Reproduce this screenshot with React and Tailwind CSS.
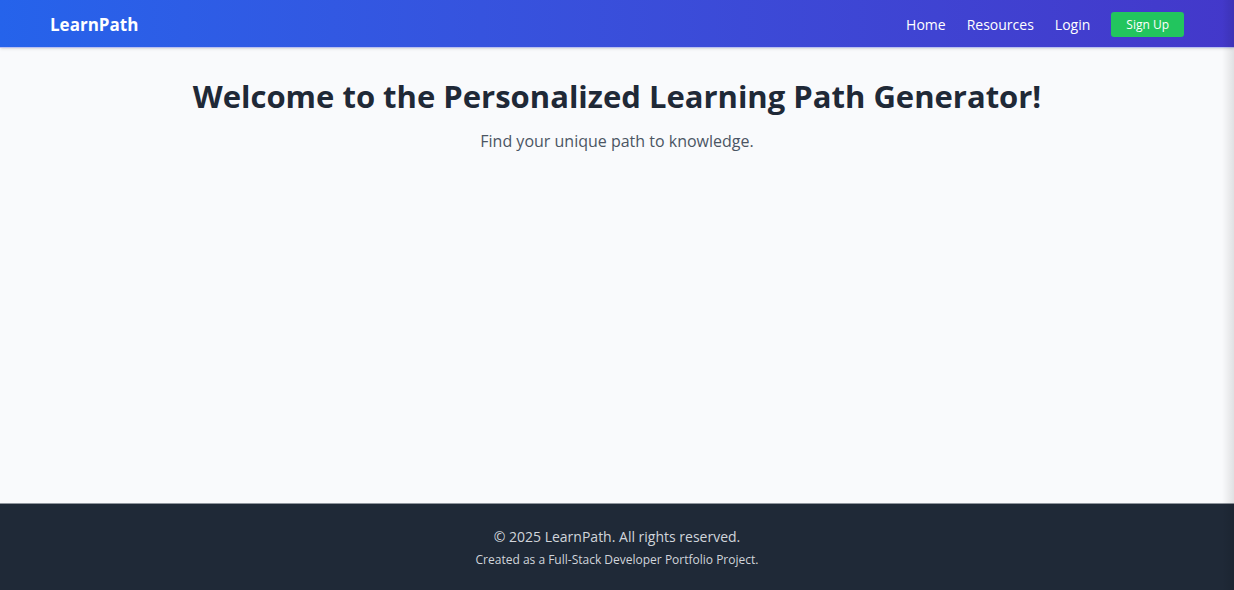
export default function App() {
  return (
    <div className="relative flex min-h-screen flex-col bg-[#f9fafc] font-['Segoe_UI','Open_Sans','Noto_Sans',sans-serif]">
      <header className="z-10 border-b border-[#b9c0f0] bg-linear-to-r from-[#2563eb] to-[#4338ca] bg-origin-border text-white shadow">
        <nav className="flex items-center justify-between px-[50px] pt-3 pb-[10px]">
          <a href="#home" className="text-[17px] leading-6 font-bold">LearnPath</a>
          <div className="flex items-center gap-[21px] text-sm">
            <a href="#home">Home</a>
            <a href="#resources">Resources</a>
            <a href="#login">Login</a>
            <a href="#signup" className="rounded-[3px] bg-[#22c55e] px-[15px] text-xs leading-[25px]">Sign Up</a>
          </div>
        </nav>
      </header>
      <main className="flex grow flex-col items-center gap-[10px] px-4 pt-[25px] text-center">
        <h1 className="text-[31px] leading-[46px] font-bold text-[#1f2937]">Welcome to the Personalized Learning Path Generator!</h1>
        <p className="text-base text-[#4b5563]">Find your unique path to knowledge.</p>
      </main>
      <footer className="border-t border-[#8f959d] bg-[#1f2937] pt-[22px] pb-[18px] text-center text-[#d1d5db]">
        <p className="text-sm leading-[22px]">© 2025 LearnPath. All rights reserved.</p>
        <p className="text-xs leading-6">Created as a Full-Stack Developer Portfolio Project.</p>
      </footer>
      <div aria-hidden="true" className="pointer-events-none absolute inset-y-0 right-0 z-20 w-3 bg-linear-to-r from-transparent to-black/10"></div>
    </div>
  );
}
